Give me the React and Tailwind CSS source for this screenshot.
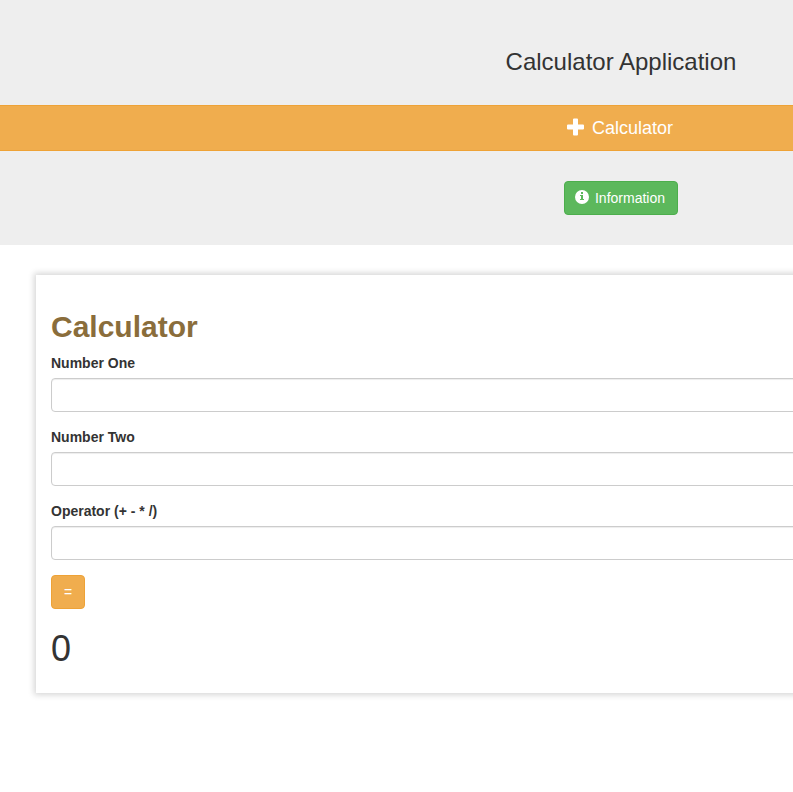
function PlusIcon() {
  return (
    <svg viewBox="0 0 18 18" className="mb-[2px] h-[18px] w-[18px] shrink-0" fill="currentColor">
      <path d="M8 .5h3q1 0 1 1V6.500h5q1 0 1 1v3q0 1-1 1H12v5q0 1-1 1h-3q-1 0-1-1V11.500h-5q-1 0-1-1v-3q0-1 1-1H7V1.500q0-1 1-1z" />
    </svg>
  );
}

function InfoIcon() {
  return (
    <svg viewBox="0 0 14 14" className="mb-[2px] h-[14px] w-[14px] shrink-0">
      <circle cx="7" cy="7" r="7" fill="#fff" />
      <path d="M6 2h2v2H6zM5 5h3v4h1v1H5V9h1V6H5z" fill="#5cb85c" />
    </svg>
  );
}

function Field({ label }) {
  return (
    <label className="mb-[15px] block">
      <span className="mb-[5px] block h-5 font-bold">{label}</span>
      <input className="block h-[34px] w-full rounded border border-[#ccc] bg-white px-3 shadow-[inset_0_1px_1px_rgba(0,0,0,0.075)] outline-none" />
    </label>
  );
}

export default function App() {
  return (
    <div className="h-[792px] w-full overflow-hidden bg-white font-['Liberation_Sans',Arial,sans-serif] text-[14px] leading-5 text-[#333]">
      <div className="w-[1241px]">
        <header className="flex h-[245px] flex-col items-center bg-[#eee]">
          <h3 className="mt-12 h-[57px] pl-px text-[24px] leading-[27px]">Calculator Application</h3>
          <button className="flex h-[46px] w-full items-center justify-center gap-2 border-y border-[#eea236] bg-[#f0ad4e] pr-[2px] text-[18px] leading-6 text-white">
            <PlusIcon />
            <span>Calculator</span>
          </button>
          <button className="mt-[30px] flex h-[34px] w-[114px] items-center justify-center gap-[6px] rounded border border-[#4cae4c] bg-[#5cb85c] pr-px text-white">
            <InfoIcon />
            <span>Information</span>
          </button>
        </header>
        <main className="mt-[30px] ml-9 h-[418px] w-[1169px] bg-white px-[15px] pt-[35px] shadow-[0_0_6px_2px_rgba(0,0,0,0.16)]">
          <h1 className="mb-[10px] text-[30px] leading-[33px] font-bold text-[#8a6d3b]">Calculator</h1>
          <Field label="Number One" />
          <Field label="Number Two" />
          <Field label="Operator (+ - * /)" />
          <button className="block h-[34px] w-[34px] rounded border border-[#eea236] bg-[#f0ad4e] text-white">=</button>
          <h1 className="mt-5 text-[36px] leading-[40px]">0</h1>
        </main>
      </div>
    </div>
  );
}
